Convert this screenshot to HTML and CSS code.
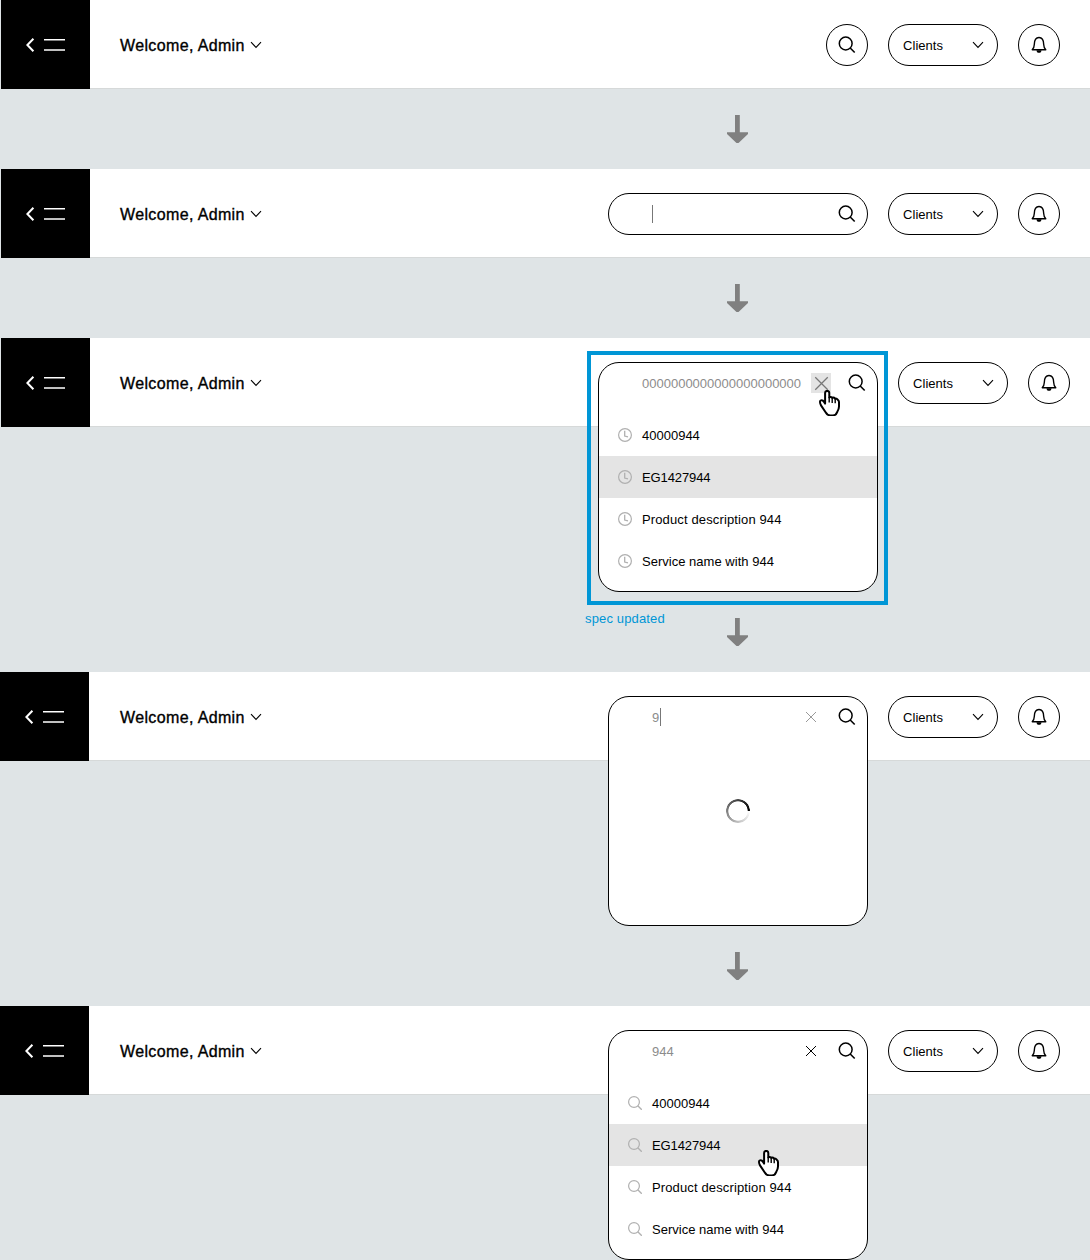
FILE: index.html
```html
<!DOCTYPE html>
<html lang="en">
<head>
<meta charset="utf-8">
<title>Header search flow</title>
<link rel="stylesheet" href="styles.css">
</head>
<body>
<svg class="sprite" aria-hidden="true">
  <symbol id="menu" viewBox="0 0 40 14"><path d="M8.4.8 2.400 7l6 6.200" stroke-width="2"/><path d="M19 1.800h21M19 12.100h21" stroke-width="1.500"/></symbol>
  <symbol id="chev" viewBox="0 0 12 8"><path d="M1 1.2l5 5.2 5-5.2" stroke-width="1.100"/></symbol>
  <symbol id="search" viewBox="0 0 18 18"><circle cx="7.700" cy="7.500" r="6.400" stroke-width="1.500"/><path d="M12.200 12l4.500 4.500" stroke-width="1.600"/></symbol>
  <symbol id="bell" viewBox="0 0 16 18"><path d="M1.2 13.7h13.6c-1.6-1.2-2-2.6-2.1-5.2C12.6 3.600 11.200 1.500 8 1.500S3.400 3.600 3.300 8.500C3.200 11.100 2.800 12.500 1.200 13.700z" stroke-width="1.400" stroke-linejoin="round"/><path d="M5.500 14.200h5c0 1.700-1 2.600-2.500 2.600s-2.500-.9-2.500-2.600z" fill="currentColor" stroke="none"/></symbol>
  <symbol id="clock" viewBox="0 0 14 14"><circle cx="7" cy="7" r="6.400" stroke-width="1.200"/><path d="M6.700 2.800v5.300l3.300.8" stroke-width="1.300"/></symbol>
  <symbol id="find" viewBox="0 0 14 14"><circle cx="6" cy="6" r="5.400" stroke-width="1.200"/><path d="M9.800 9.800l4 4" stroke-width="1.300"/></symbol>
  <symbol id="close" viewBox="0 0 12 12"><path d="M1 1l10 10M11 1 1 11" stroke-width="1"/></symbol>
  <symbol id="arrow" viewBox="0 0 21 28"><path d="M8 0h4.800v17.200H21V19l-9.200 8.700q-1.300.7-2.600 0L0 19v-1.800h8z" fill="currentColor" stroke="none"/></symbol>
  <symbol id="hand" viewBox="0 0 21 26"><path d="M6.100 13.600V3a2 2 0 0 1 4.200 0v4.400q1.600-.8 2.900.4 1.700-.7 2.700.8 1.900-.5 2.700 1 1.400.8 1.400 2.500v4.500c0 2.200-.7 3.600-1.700 5.200-.8 2.200-2 3.600-4.300 3.600h-2.700c-2.200 0-3.600-1.200-4.700-3.200L2 15.400c-1-2.200-1.500-4.200-.4-4.900 1.600-.9 3 .3 4.500 3.100z" fill="#fff" stroke-width="2" stroke-linejoin="round"/><path d="M10.200 7v5.600M13.200 7.800v5.100M16.200 8.600v4.700" stroke-width="1.400"/></symbol>
</svg>

<main class="flow">
  <section class="frame frame-short">
    <header class="bar">
      <button class="menu inset"><svg><use href="#menu"/></svg></button>
      <div class="welcome">Welcome, Admin<svg class="chev"><use href="#chev"/></svg></div>
      <div class="tools">
        <button class="round"><svg class="lens"><use href="#search"/></svg></button>
        <button class="select">Clients<svg class="chev"><use href="#chev"/></svg></button>
        <button class="round"><svg class="bell"><use href="#bell"/></svg></button>
      </div>
    </header>
    <div class="step"><span class="note"></span><svg class="arrow"><use href="#arrow"/></svg></div>
  </section>

  <section class="frame frame-short">
    <header class="bar">
      <button class="menu inset"><svg><use href="#menu"/></svg></button>
      <div class="welcome">Welcome, Admin<svg class="chev"><use href="#chev"/></svg></div>
      <div class="tools">
        <div class="panel"><div class="field"><span class="query empty"><i class="caret"></i></span><svg class="lens"><use href="#search"/></svg></div></div>
        <button class="select">Clients<svg class="chev"><use href="#chev"/></svg></button>
        <button class="round"><svg class="bell"><use href="#bell"/></svg></button>
      </div>
    </header>
    <div class="step"><span class="note"></span><svg class="arrow"><use href="#arrow"/></svg></div>
  </section>

  <section class="frame frame-tall">
    <header class="bar">
      <button class="menu inset"><svg><use href="#menu"/></svg></button>
      <div class="welcome">Welcome, Admin<svg class="chev"><use href="#chev"/></svg></div>
      <div class="tools shifted">
        <div class="panel open wide">
          <div class="field"><span class="query">0000000000000000000000</span><span class="clear hover"><svg><use href="#close"/></svg></span><svg class="lens"><use href="#search"/></svg></div>
          <ul class="results">
            <li class="code"><svg><use href="#clock"/></svg>40000944</li>
            <li class="code active"><svg><use href="#clock"/></svg>EG1427944</li>
            <li><svg><use href="#clock"/></svg>Product description 944</li>
            <li class="service"><svg><use href="#clock"/></svg>Service name with 944</li>
          </ul>
          <svg class="hand on-clear"><use href="#hand"/></svg>
          <div class="highlight"></div>
        </div>
        <button class="select">Clients<svg class="chev"><use href="#chev"/></svg></button>
        <button class="round"><svg class="bell"><use href="#bell"/></svg></button>
      </div>
    </header>
    <div class="step"><span class="note">spec updated</span><svg class="arrow"><use href="#arrow"/></svg></div>
  </section>

  <section class="frame frame-tall">
    <header class="bar">
      <button class="menu"><svg><use href="#menu"/></svg></button>
      <div class="welcome">Welcome, Admin<svg class="chev"><use href="#chev"/></svg></div>
      <div class="tools">
        <div class="panel open">
          <div class="field"><span class="query">9<i class="caret"></i></span><span class="clear faint"><svg><use href="#close"/></svg></span><svg class="lens"><use href="#search"/></svg></div>
          <div class="loading"><span class="spinner"></span></div>
        </div>
        <button class="select">Clients<svg class="chev"><use href="#chev"/></svg></button>
        <button class="round"><svg class="bell"><use href="#bell"/></svg></button>
      </div>
    </header>
    <div class="step"><span class="note"></span><svg class="arrow"><use href="#arrow"/></svg></div>
  </section>

  <section class="frame frame-last">
    <header class="bar">
      <button class="menu"><svg><use href="#menu"/></svg></button>
      <div class="welcome">Welcome, Admin<svg class="chev"><use href="#chev"/></svg></div>
      <div class="tools">
        <div class="panel open">
          <div class="field"><span class="query">944</span><span class="clear"><svg><use href="#close"/></svg></span><svg class="lens"><use href="#search"/></svg></div>
          <ul class="results">
            <li class="code"><svg><use href="#find"/></svg>40000944</li>
            <li class="code active"><svg><use href="#find"/></svg>EG1427944</li>
            <li><svg><use href="#find"/></svg>Product description 944</li>
            <li class="service"><svg><use href="#find"/></svg>Service name with 944</li>
          </ul>
          <svg class="hand on-result"><use href="#hand"/></svg>
        </div>
        <button class="select">Clients<svg class="chev"><use href="#chev"/></svg></button>
        <button class="round"><svg class="bell"><use href="#bell"/></svg></button>
      </div>
    </header>
  </section>
</main>
</body>
</html>
```
FILE: styles.css
```css
* { box-sizing: border-box; }
body {
  margin: 0;
  background: #dfe4e6;
  color: #000;
  font: 13px/20px "Liberation Sans", Arial, sans-serif;
}
svg { display: block; flex: none; fill: none; stroke: currentColor; }
.sprite { position: absolute; width: 0; height: 0; }
button { padding: 0; border: 0; border-radius: 0; background: none; color: inherit; font: inherit; }

.flow { width: 1090px; height: 1260px; overflow: hidden; }
.frame { display: flex; flex-direction: column; justify-content: space-between; }
.frame-short { height: 169px; }
.frame-tall { height: 334px; }
.frame-last { height: 254px; }

.bar { display: flex; height: 89px; background: #fff; border-bottom: 1px solid #d6d9d9; }
.menu { display: flex; flex: none; width: 89px; height: 89px; padding: 38px 0 0 24px; background: #000; color: #fff; margin-right: 31px; }
.menu svg { width: 40px; height: 14px; }
.menu.inset { width: 90px; margin-right: 30px; border-left: 1px solid #dfe4e6; }
.welcome { display: flex; align-items: center; gap: 5px; height: 92px; font-size: 16px; letter-spacing: 0.36px; -webkit-text-stroke: 0.35px #000; }
.chev { width: 12px; height: 8px; margin-top: -2px; }
.tools { display: flex; align-items: flex-start; gap: 20px; margin-left: auto; padding: 24px 30px 0 0; }
.tools.shifted { padding-right: 20px; }

.round, .select { display: flex; align-items: center; height: 42px; border: 1px solid #000; border-radius: 21px; background: #fff; }
.round { justify-content: center; width: 42px; }
.select { justify-content: space-between; width: 110px; padding: 1px 13px 0 14px; letter-spacing: 0.05px; }
.lens { width: 18px; height: 18px; }
.bell { width: 16px; height: 18px; }

.panel { position: relative; width: 260px; height: 42px; border: 1px solid #000; border-radius: 21px; background: #fff; }
.panel.open { height: 230px; }
.panel.wide { width: 280px; }
.field { display: flex; align-items: center; height: 40px; padding: 0 11px 0 43px; }
.query { display: flex; align-items: center; flex: 1; height: 20px; margin-top: 1px; color: #8c8c8c; }
.caret { width: 1px; height: 18px; margin: -2px 0 0 1px; background: #777; }
.empty .caret { margin-left: 0; }
.clear { display: flex; align-items: center; justify-content: center; width: 20px; height: 20px; margin-right: 17px; }
.clear svg { width: 12px; height: 12px; }
.clear.faint { color: #999; }
.clear.hover { background: #e4e4e4; color: #777; }
.clear.hover svg { width: 15px; height: 15px; }
.results { margin: 11px 0 0; padding: 0; list-style: none; }
.results li { display: flex; align-items: center; gap: 10px; height: 42px; padding: 1px 0 0 19px; letter-spacing: 0.13px; }
.results .code { letter-spacing: 0; }
.results .code.active { letter-spacing: -0.1px; }
.results .service { letter-spacing: 0.02px; }
.results svg { width: 14px; height: 14px; margin-top: -2px; color: #b0b0b0; }
.results .active { background: #e4e4e4; }
.loading { display: flex; justify-content: center; padding-top: 62px; }
.spinner { width: 24px; height: 24px; border-radius: 50%; background: conic-gradient(from 90deg, #fff, #000); -webkit-mask: radial-gradient(closest-side, transparent 9.3px, #000 10px); mask: radial-gradient(closest-side, transparent 9.3px, #000 10px); }

.hand { position: absolute; width: 21px; height: 26px; }
.on-clear { left: 220px; top: 27px; }
.on-result { left: 149px; top: 119px; }
.highlight { position: absolute; inset: -12px -11px -14px -12px; border: 4px solid #0096d6; }

.step { display: flex; align-items: flex-end; padding: 0 0 26px 585px; }
.note { width: 142px; height: 20px; margin-bottom: 17px; color: #0096d6; letter-spacing: 0.15px; }
.arrow { width: 21px; height: 28px; color: #808080; }
```
